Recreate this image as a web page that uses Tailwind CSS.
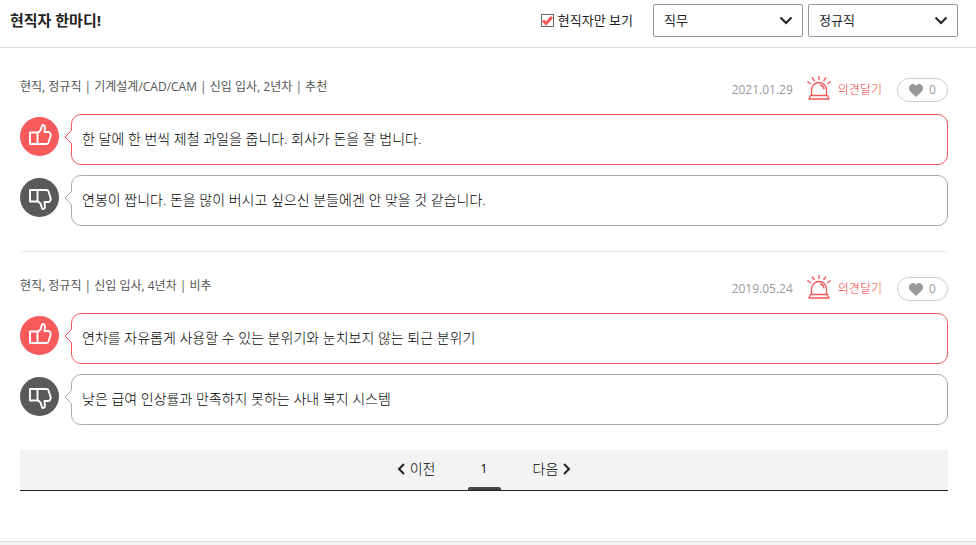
<!DOCTYPE html>
<html lang="ko">
<head>
  <meta charset="UTF-8" />
  <meta name="viewport" content="width=device-width, initial-scale=1.0" />
  <title>현직자 한마디!</title>
  <script src="https://cdn.jsdelivr.net/npm/@tailwindcss/browser@4"></script>
</head>
<body class="flex min-h-screen flex-col bg-white font-['Open_Sans','Noto_Sans_CJK_KR',sans-serif] text-[13px] text-[#222]">

  <!-- Icons -->
  <svg class="hidden">
    <symbol id="thumb" viewBox="0 0 39 39">
      <g fill="none" stroke="#fff" stroke-width="1.9" stroke-linejoin="round">
        <path d="M10 15.500h7.500v11.500h-7.500z" />
        <path d="M17.500 16l3-2.500 1.500-4.700q.8-1.300 2-.5.900.600.900 2l-.400 4.700h4q1.500.100 1.800 1.600l.5 1.600-2.300 7.300q-.5 1.500-2 1.500h-9" />
      </g>
    </symbol>
    <symbol id="siren" viewBox="0 0 24 24">
      <g fill="none" stroke="#f45757" stroke-width="1.300">
        <path d="M4.500 19v-5a7.500 7.500 0 0 1 15 0v5" />
        <path d="M3.500 19.500h17l1.500 3.500h-20z" stroke-linejoin="round" />
        <path d="M13 9q3.500.5 4 4.500" />
        <path d="M12 0v4M5 1.500l2.500 3.500M19 1.500l-2.500 3.500M.3 5.500l3.500 2.500M23.700 5.500l-3.500 2.500" />
      </g>
    </symbol>
    <symbol id="heart" viewBox="0 0 14 13">
      <path fill="#999" d="M7 13L1.200 7.500C-.5 5.700-.3 2.600 1.200 1.200 3-.5 5.800-.2 7 2c1.200-2.200 4-2.500 5.800-.8 1.500 1.400 1.700 4.500 0 6.300z" />
    </symbol>
    <symbol id="tail" viewBox="0 0 8 14">
      <path fill="#fff" d="M8 0L1 7l7 7z" />
      <path fill="none" stroke="currentColor" d="M7.500 .5L1 7l6.500 6.500" />
    </symbol>
    <symbol id="down" viewBox="0 0 14 9">
      <path fill="none" stroke="#222" stroke-width="2" d="M1.500 1.500L7 7l5.500-5.500" />
    </symbol>
  </svg>

  <!-- Header -->
  <header class="flex items-start justify-between border-b border-[#ddd] pt-1 pr-[18px] pb-[10px] pl-[10px]">
    <h1 class="text-[15px] leading-8 font-bold">현직자 한마디!</h1>
    <div class="flex items-center">
      <label class="mr-5 flex items-center gap-1">
        <span class="relative flex">
          <input type="checkbox" checked class="peer size-[13px] appearance-none border border-[#666] bg-white" />
          <svg class="pointer-events-none absolute inset-0 hidden size-[13px] peer-checked:block" viewBox="0 0 13 13"><path fill="none" stroke="#f45757" stroke-width="3" d="M2 6.500l3 3 6-6.500" /></svg>
        </span>
        현직자만 보기
      </label>
      <div class="flex gap-[5px]">
        <div class="relative">
          <select aria-label="직무" class="h-[33px] w-[150px] appearance-none rounded-xs border border-[#999] bg-white pl-[10px]">
            <option>직무</option>
          </select>
          <svg class="pointer-events-none absolute top-3 right-[10px] h-[9px] w-[14px]"><use href="#down" /></svg>
        </div>
        <div class="relative">
          <select aria-label="고용형태" class="h-[33px] w-[150px] appearance-none rounded-xs border border-[#999] bg-white pl-[10px]">
            <option>정규직</option>
          </select>
          <svg class="pointer-events-none absolute top-3 right-[10px] h-[9px] w-[14px]"><use href="#down" /></svg>
        </div>
      </div>
    </div>
  </header>

  <main class="pt-[5px] pr-[28px] pb-[50px] pl-[20px]">

    <!-- Review 1 -->
    <article class="border-b border-[#eaeaea] py-[25px]">
      <div class="mb-3 flex h-6 items-start justify-between text-xs">
        <p class="leading-[18px] text-[#555]">현직, 정규직 | 기계설계/CAD/CAM | 신입 입사, 2년차 | 추천</p>
        <div class="flex items-center">
          <time class="mr-[14px] text-[#999]">2021.01.29</time>
          <button class="mr-[15px] flex items-center gap-[7px] font-light text-[#f03a3a]">
            <svg class="-mt-1 size-6"><use href="#siren" /></svg>의견달기
          </button>
          <button aria-label="좋아요" class="flex h-6 w-[51px] items-center justify-center gap-[6px] rounded-full border border-[#ccc] text-[#999]">
            <svg class="h-[13px] w-[14px]"><use href="#heart" /></svg>0
          </button>
        </div>
      </div>
      <div class="flex flex-col gap-[10px] text-sm font-light text-black">
        <div class="flex items-start gap-3">
          <svg class="mt-[3px] size-[39px] shrink-0 rounded-full bg-[#f65a5a]"><use href="#thumb" /></svg>
          <div class="relative grow rounded-[10px] border border-[#f45757] px-[10px] pt-[13px] pb-[15px] leading-[21px]">
            <svg class="absolute top-[15px] -left-2 h-[14px] w-2 text-[#f45757]"><use href="#tail" /></svg>
            <p>한 달에 한 번씩 제철 과일을 줍니다. 회사가 돈을 잘 법니다.</p>
          </div>
        </div>
        <div class="flex items-start gap-3">
          <svg class="mt-[3px] size-[39px] shrink-0 -scale-y-100 rounded-full bg-[#5a5a5a]"><use href="#thumb" /></svg>
          <div class="relative grow rounded-[10px] border border-[#aaa] px-[10px] pt-[13px] pb-[15px] leading-[21px]">
            <svg class="absolute top-[15px] -left-2 h-[14px] w-2 text-[#aaa]"><use href="#tail" /></svg>
            <p>연봉이 짭니다. 돈을 많이 버시고 싶으신 분들에겐 안 맞을 것 같습니다.</p>
          </div>
        </div>
      </div>
    </article>

    <!-- Review 2 -->
    <article class="py-[25px]">
      <div class="mb-3 flex h-6 items-start justify-between text-xs">
        <p class="leading-[18px] text-[#555]">현직, 정규직 | 신입 입사, 4년차 | 비추</p>
        <div class="flex items-center">
          <time class="mr-[14px] text-[#999]">2019.05.24</time>
          <button class="mr-[15px] flex items-center gap-[7px] font-light text-[#f03a3a]">
            <svg class="-mt-1 size-6"><use href="#siren" /></svg>의견달기
          </button>
          <button aria-label="좋아요" class="flex h-6 w-[51px] items-center justify-center gap-[6px] rounded-full border border-[#ccc] text-[#999]">
            <svg class="h-[13px] w-[14px]"><use href="#heart" /></svg>0
          </button>
        </div>
      </div>
      <div class="flex flex-col gap-[10px] text-sm font-light text-black">
        <div class="flex items-start gap-3">
          <svg class="mt-[3px] size-[39px] shrink-0 rounded-full bg-[#f65a5a]"><use href="#thumb" /></svg>
          <div class="relative grow rounded-[10px] border border-[#f45757] px-[10px] pt-[13px] pb-[15px] leading-[21px]">
            <svg class="absolute top-[15px] -left-2 h-[14px] w-2 text-[#f45757]"><use href="#tail" /></svg>
            <p>연차를 자유롭게 사용할 수 있는 분위기와 눈치보지 않는 퇴근 분위기</p>
          </div>
        </div>
        <div class="flex items-start gap-3">
          <svg class="mt-[3px] size-[39px] shrink-0 -scale-y-100 rounded-full bg-[#5a5a5a]"><use href="#thumb" /></svg>
          <div class="relative grow rounded-[10px] border border-[#aaa] px-[10px] pt-[13px] pb-[15px] leading-[21px]">
            <svg class="absolute top-[15px] -left-2 h-[14px] w-2 text-[#aaa]"><use href="#tail" /></svg>
            <p>낮은 급여 인상률과 만족하지 못하는 사내 복지 시스템</p>
          </div>
        </div>
      </div>
    </article>

    <!-- Pagination -->
    <nav class="flex h-[41px] justify-center gap-8 border-b border-[#222] bg-[#f3f3f3] text-sm leading-[38px] font-light text-black">
      <a href="#" class="flex gap-[5px]">
        <svg class="mt-[13px] h-3 w-2" viewBox="0 0 8 12"><path fill="none" stroke="#222" stroke-width="2" d="M7 1L2 6l5 5" /></svg>이전
      </a>
      <a href="#" aria-current="page" class="flex w-[33px] flex-col items-center justify-between text-xs leading-[38px] font-normal">
        <span class="h-9">1</span>
        <span class="h-[3px] w-full shrink-0 rounded-t-xs bg-[#444]"></span>
      </a>
      <a href="#" class="flex gap-[5px]">
        다음<svg class="mt-[13px] h-3 w-2" viewBox="0 0 8 12"><path fill="none" stroke="#222" stroke-width="2" d="M1 1l5 5-5 5" /></svg>
      </a>
    </nav>
  </main>

  <footer class="grow border-t border-[#ddd] bg-[#f4f4f4]"></footer>

</body>
</html>
